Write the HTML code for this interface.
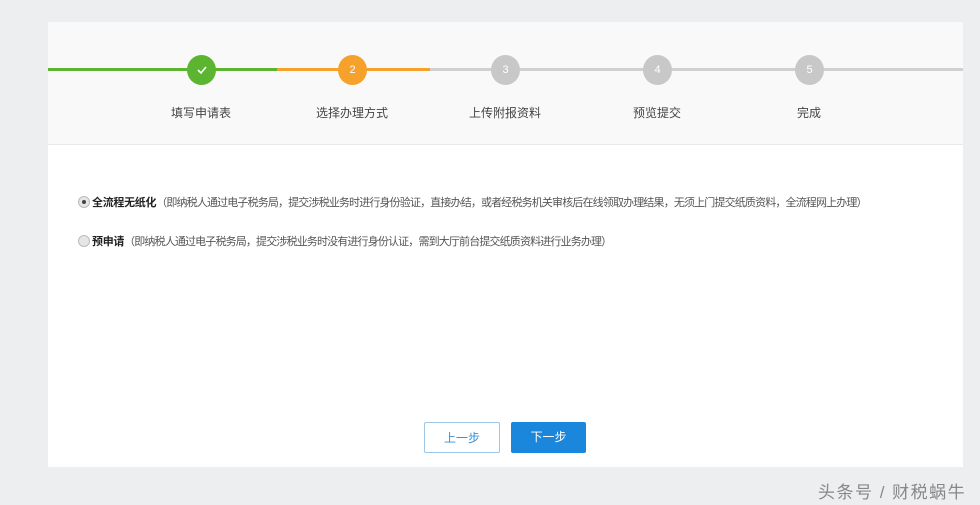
<!DOCTYPE html>
<html><head><meta charset="utf-8"><style>
*{margin:0;padding:0;box-sizing:border-box}
body{width:980px;height:505px;background:#edeef0;position:relative;overflow:hidden;font-family:"Liberation Sans","Noto Sans CJK SC",sans-serif;}
#p{position:absolute;left:48px;top:22px;width:915px;height:445px;background:#fff}
#h{position:absolute;left:0;top:0;width:915px;height:123px;background:#f9f9f9;border-bottom:1px solid #e8e8e8}
.l{position:absolute;top:46px;height:3px}
.c{position:absolute;top:33px;width:29px;height:30px;border-radius:50%;color:#fff;font-size:11px;text-align:center;line-height:30px}
.t{position:absolute;top:82px;width:120px;text-align:center;font-size:12px;color:#444}
.r{position:absolute;left:30px;font-size:11px;letter-spacing:-0.85px;color:#555;white-space:nowrap}
.r b{color:#222;letter-spacing:-0.3px}
.rd{display:inline-block;width:12px;height:12px;border-radius:50%;border:1px solid #bbb;background:#e6e6e6;vertical-align:-2px;margin-right:2px;position:relative}
.btn{position:absolute;top:400px;width:76px;height:31px;font-size:12px;text-align:center;line-height:30px;border-radius:2px}
</style></head><body>
<div id="p">
<div id="h">
<div class="l" style="left:0;width:229px;background:#5cb531"></div>
<div class="l" style="left:229px;width:153px;background:#f6a12b"></div>
<div class="l" style="left:382px;width:533px;background:#d0d0d0"></div>
<div class="c" style="left:139px;background:#5cb531">
<svg width="12" height="10" viewBox="0 0 12 10" style="margin-top:10px"><path d="M2 5l3 3 5-6" stroke="#fff" stroke-width="1.6" fill="none"/></svg></div>
<div class="c" style="left:290px;background:#f6a12b">2</div>
<div class="c" style="left:443px;background:#c8c8c8">3</div>
<div class="c" style="left:595px;background:#c8c8c8">4</div>
<div class="c" style="left:747px;background:#c8c8c8">5</div>
<div class="t" style="left:93px">填写申请表</div>
<div class="t" style="left:244px">选择办理方式</div>
<div class="t" style="left:397px">上传附报资料</div>
<div class="t" style="left:549px">预览提交</div>
<div class="t" style="left:701px">完成</div>
</div>
<div class="r" style="top:172px"><span class="rd"><span style="position:absolute;left:3px;top:3px;width:4px;height:4px;border-radius:50%;background:#444"></span></span><b>全流程无纸化</b>（即纳税人通过电子税务局，提交涉税业务时进行身份验证，直接办结，或者经税务机关审核后在线领取办理结果，无须上门提交纸质资料，全流程网上办理）</div>
<div class="r" style="top:211px"><span class="rd"></span><b>预申请</b>（即纳税人通过电子税务局，提交涉税业务时没有进行身份认证，需到大厅前台提交纸质资料进行业务办理）</div>
<div class="btn" style="left:376px;border:1px solid #9cc7e6;color:#3a8fd0;background:#fff">上一步</div>
<div class="btn" style="left:463px;background:#1a87dc;color:#fff;width:75px">下一步</div>
</div>
<div style="position:absolute;left:818px;top:478px;font-size:17px;letter-spacing:1.5px;color:#888;white-space:nowrap">头条号 / 财税蜗牛</div>
</body></html>
